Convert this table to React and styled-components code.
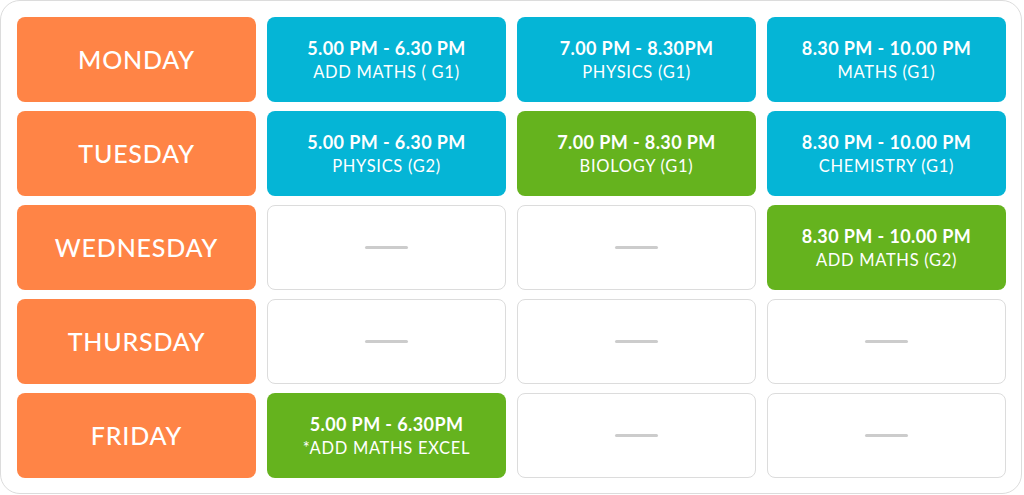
import React from "react";
import styled, { createGlobalStyle } from "styled-components";

const GlobalStyle = createGlobalStyle`
  body {
    margin: 0;
    background: #ffffff;
    font-family: Lato, "Noto Sans", sans-serif;
  }
`;

const COLORS = {
  blue: "#05b5d6",
  green: "#65b31e",
};

// each day: list of 3 slots, null = empty
const schedule = [
  {
    day: "MONDAY",
    slots: [
      { time: "5.00 PM - 6.30 PM", subject: "ADD MATHS ( G1)", color: "blue" },
      { time: "7.00 PM - 8.30PM", subject: "PHYSICS (G1)", color: "blue" },
      { time: "8.30 PM - 10.00 PM", subject: "MATHS (G1)", color: "blue" },
    ],
  },
  {
    day: "TUESDAY",
    slots: [
      { time: "5.00 PM - 6.30 PM", subject: "PHYSICS (G2)", color: "blue" },
      { time: "7.00 PM - 8.30 PM", subject: "BIOLOGY (G1)", color: "green" },
      { time: "8.30 PM - 10.00 PM", subject: "CHEMISTRY (G1)", color: "blue" },
    ],
  },
  {
    day: "WEDNESDAY",
    slots: [
      null,
      null,
      { time: "8.30 PM - 10.00 PM", subject: "ADD MATHS (G2)", color: "green" },
    ],
  },
  {
    day: "THURSDAY",
    slots: [null, null, null],
  },
  {
    day: "FRIDAY",
    slots: [
      { time: "5.00 PM - 6.30PM", subject: "*ADD MATHS EXCEL", color: "green" },
      null,
      null,
    ],
  },
];

function App() {
  return (
    <>
      <GlobalStyle />
      <Card>
        <Grid>
          {schedule.map((row) => (
            <React.Fragment key={row.day}>
              <DayCell>{row.day}</DayCell>
              {row.slots.map((slot, i) =>
                slot ? (
                  <SlotCell key={i} color={COLORS[slot.color]}>
                    <Time>{slot.time}</Time>
                    <Subject>{slot.subject}</Subject>
                  </SlotCell>
                ) : (
                  <EmptyCell key={i}>
                    <Dash />
                  </EmptyCell>
                )
              )}
            </React.Fragment>
          ))}
        </Grid>
      </Card>
    </>
  );
}

export default App;

const Card = styled.div`
  box-sizing: border-box;
  width: 1022px;
  height: 494px;
  padding: 16px;
  border: 1px solid #dcdcdc;
  border-radius: 20px;
  background: #ffffff;
`;

const Grid = styled.div`
  display: grid;
  grid-template-columns: repeat(4, 239px);
  grid-template-rows: repeat(5, 85px);
  column-gap: 11px;
  row-gap: 9px;
`;

const DayCell = styled.div`
  display: flex;
  align-items: center;
  justify-content: center;
  padding-bottom: 2px;
  border-radius: 8px;
  background: #ff8446;
  color: #ffffff;
  font-size: 25px;
  font-weight: 500;
  letter-spacing: 0.8px;
`;

const SlotCell = styled.div`
  display: flex;
  flex-direction: column;
  align-items: center;
  justify-content: center;
  gap: 2px;
  border-radius: 8px;
  background: ${(props) => props.color};
  color: #ffffff;
`;

const Time = styled.div`
  font-size: 18px;
  font-weight: 700;
  line-height: 22px;
  letter-spacing: 0.4px;
`;

const Subject = styled.div`
  font-size: 16.5px;
  font-weight: 400;
  line-height: 22px;
  letter-spacing: 0.7px;
`;

const EmptyCell = styled.div`
  box-sizing: border-box;
  display: flex;
  align-items: center;
  justify-content: center;
  border: 1px solid #dcdcdc;
  border-radius: 8px;
  background: #ffffff;
`;

const Dash = styled.div`
  width: 43px;
  height: 3px;
  border-radius: 2px;
  background: #cccccc;
`;
